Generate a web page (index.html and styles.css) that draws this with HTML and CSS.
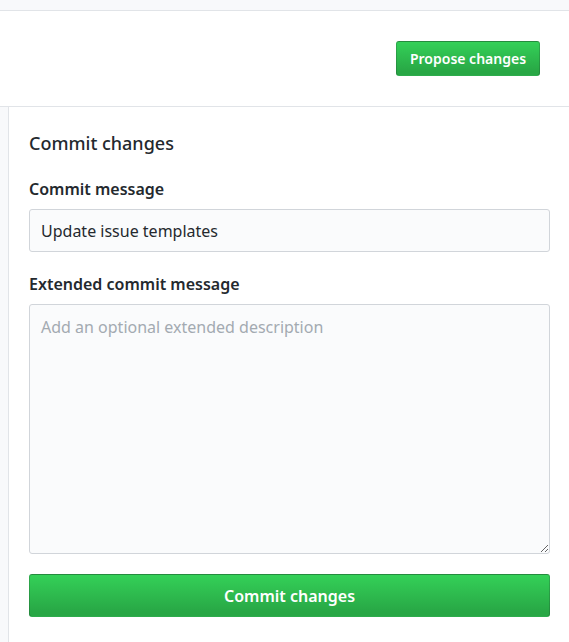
FILE: index.html
```html
<!DOCTYPE html>
<html>
<head>
<meta charset="utf-8">
<link rel="stylesheet" href="styles.css">
</head>
<body>
<div class="topstrip"></div>
<div class="toolbar">
  <button class="btn btn-sm">Propose changes</button>
</div>
<div class="main">
  <div class="gutter"></div>
  <div class="panel">
    <h3 class="title">Commit changes</h3>
    <label class="label">Commit message</label>
    <input class="field" type="text" value="Update issue templates">
    <label class="label label-ext">Extended commit message</label>
    <textarea class="field area" placeholder="Add an optional extended description"></textarea>
    <button class="btn btn-block">Commit changes</button>
  </div>
</div>
</body>
</html>
```
FILE: styles.css
```css
* { box-sizing: border-box; }
html, body { margin: 0; padding: 0; background: #fff; }
body {
  font-family: "Noto Sans", "Open Sans", sans-serif;
  color: #24292e;
  width: 569px;
  height: 642px;
  overflow: hidden;
}
.topstrip {
  height: 11px;
  background: #f8f9fb;
  border-bottom: 1px solid #e1e4e8;
}
.toolbar {
  height: 96px;
  display: flex;
  justify-content: flex-end;
  align-items: flex-start;
  padding: 30px 29px 0 0;
  border-bottom: 1px solid #e1e4e8;
}
.btn {
  font-family: inherit;
  color: #fff;
  font-weight: 600;
  border: 1px solid rgba(27,31,35,0.2);
  border-radius: 3px;
  background-image: linear-gradient(-180deg, #34d058 0%, #28a745 90%);
  cursor: pointer;
}
.btn-sm {
  height: 35px;
  width: 144px;
  font-size: 14px;
  padding: 0;
}
.main {
  display: flex;
  height: 535px;
}
.gutter {
  width: 9px;
  background: #f8f9fb;
  border-right: 1px solid #e1e4e8;
}
.panel {
  flex: 1;
  padding: 23px 19px 0 20px;
  display: flex;
  flex-direction: column;
}
.title {
  margin: 0;
  font-size: 18px;
  font-weight: 500;
  line-height: 27px;
}
.label {
  font-size: 16px;
  font-weight: 600;
  line-height: 24px;
  margin-top: 20px;
  margin-bottom: 8px;
}
.label-ext { margin-top: 20px; }
.field {
  font-family: inherit;
  font-size: 16px;
  color: #24292e;
  background: #fafbfc;
  border: 1px solid #d1d5da;
  border-radius: 3px;
  height: 43px;
  padding: 8px 11px;
  width: 100%;
  outline: none;
}
.area {
  height: 250px;
  resize: vertical;
  padding: 10px 11px;
  line-height: 24px;
}
.area::placeholder { color: #a3aab1; }
.btn-block {
  margin-top: 20px;
  height: 43px;
  width: 100%;
  font-size: 16px;
}
```
